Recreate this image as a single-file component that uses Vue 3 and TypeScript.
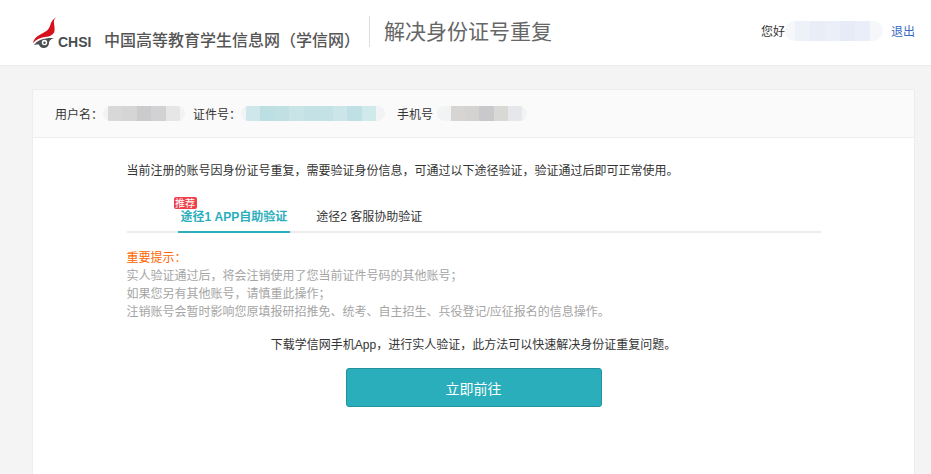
<script setup lang="ts">
import { ref } from 'vue'

// 打码区域的色块
const userCells = ['#d8d8d8', '#d6d5d5', '#cbcbcb', '#d2d2d4', '#e6e6e6']
const idCells = ['#cfe6ea', '#bbdfe3', '#c0e0e4', '#c8e4e7', '#c4e2e5', '#c4e2e5', '#cbe5e9', '#bfe0e4', '#d0e9ea']
const phoneCells = ['#d6d5d3', '#d4d3d1', '#c9c9cb', '#d8d8d5', '#e6e7ea']
const greetCells = ['#edf1f8', '#e8edf7', '#ebeff8', '#e6ecf7', '#e9eef8']

const tabs = ref([
  { label: '途径1 APP自助验证', badge: true, active: true },
  { label: '途径2 客服协助验证', badge: false, active: false }
])

const tips = [
  '实人验证通过后，将会注销使用了您当前证件号码的其他账号；',
  '如果您另有其他账号，请慎重此操作；',
  '注销账号会暂时影响您原填报研招推免、统考、自主招生、兵役登记/应征报名的信息操作。'
]
</script>

<template>
  <div class="page">
    <header class="top">
      <div class="brand">
        <div class="logo">
          <svg class="bird" width="26" height="32" viewBox="0 0 26 32">
            <path d="M24 0C20 1.500 18 4.500 17 9 16 12 14 14 10 16 5 18.500 1 21 0 26 3 22.500 7 20.500 12 20 17 19.500 20.500 18 21.500 14 22 10 20.500 6 21 3.500 21.300 2 22.500 .8 24 0z" fill="#d8101c" />
            <path d="M1 28C4 23 12 20.500 21 21 17.500 22 16 24 16 26 16 29 13.500 31 10.500 31 8 31 6.500 29.500 6 27.500 4.500 27.500 2.500 27.500 1 28z" fill="#4d5052" />
            <circle cx="11.500" cy="25.500" r="2.700" fill="#fff" />
            <circle cx="11.500" cy="25.800" r="1.200" fill="#4d5052" />
          </svg>
          <span class="chsi">CHSI</span>
        </div>
        <span class="site-name">中国高等教育学生信息网（学信网）</span>
        <span class="divider"></span>
        <span class="page-name">解决身份证号重复</span>
      </div>
      <div class="account">
        <span>您好</span>
        <span class="blur greet">
          <i v-for="(c, i) in greetCells" :key="i" :style="{ background: c }"></i>
        </span>
        <a class="logout">退出</a>
      </div>
    </header>

    <main class="main">
      <section class="card">
        <div class="card-head">
          <span>用户名：</span>
          <span class="blur user">
            <i v-for="(c, i) in userCells" :key="i" :style="{ background: c }"></i>
          </span>
          <span class="field">证件号：</span>
          <span class="blur id">
            <i v-for="(c, i) in idCells" :key="i" :style="{ background: c }"></i>
          </span>
          <span class="field phone-label">手机号</span>
          <span class="blur phone">
            <i v-for="(c, i) in phoneCells" :key="i" :style="{ background: c }"></i>
          </span>
        </div>

        <div class="content">
          <p class="intro">当前注册的账号因身份证号重复，需要验证身份信息，可通过以下途径验证，验证通过后即可正常使用。</p>

          <div class="tabs">
            <div v-for="tab in tabs" :key="tab.label" class="tab" :class="{ active: tab.active }">
              <span v-if="tab.badge" class="badge">推荐</span>
              {{ tab.label }}
            </div>
          </div>

          <div class="tips">
            <div class="tips-title">重要提示：</div>
            <div v-for="line in tips" :key="line">{{ line }}</div>
          </div>

          <p class="download">下载学信网手机App，进行实人验证，此方法可以快速解决身份证重复问题。</p>
          <div class="actions">
            <button class="go" type="button">立即前往</button>
          </div>
        </div>
      </section>
    </main>
  </div>
</template>

<style>
html,
body {
  margin: 0;
  background: #f4f4f4;
}
</style>

<style scoped>
.page {
  height: 474px;
  overflow: hidden;
  font-family: "Liberation Sans", "Noto Sans CJK SC", sans-serif;
  font-size: 12px;
  color: #333;
}

.top {
  height: 65px;
  background: #fff;
  border-bottom: 1px solid #ececec;
  display: flex;
  align-items: center;
  justify-content: space-between;
  padding: 0 16px 0 33px;
}

.brand {
  display: flex;
  align-items: center;
}

.logo {
  display: flex;
  align-items: flex-end;
  width: 71px;
  height: 32px;
}

.bird {
  flex: none;
}

.chsi {
  font-weight: 700;
  font-size: 14px;
  line-height: 14px;
  color: #484e50;
  margin-left: -1px;
}

.site-name {
  font-size: 16px;
  font-weight: 500;
  color: #555;
  white-space: nowrap;
  padding-top: 12px;
}

.divider {
  width: 1px;
  height: 31px;
  background: #ddd;
  margin: 0 14px 2px 9px;
}

.page-name {
  font-size: 21px;
  color: #666;
  white-space: nowrap;
  padding-bottom: 5px;
}

.account {
  display: flex;
  align-items: center;
  margin-bottom: 4px;
}

.logout {
  color: #3a6bc4;
  margin-left: 8px;
}

.blur {
  display: inline-flex;
  height: 15px;
  border-radius: 8px;
  overflow: hidden;
  background: #f2f3f5;
  box-sizing: border-box;
}

.blur i {
  display: block;
  flex: 1;
}

.greet {
  width: 98px;
  height: 20px;
  border-radius: 10px;
  padding: 0 13px 0 10px;
  background: #f6f7fa;
}

.user {
  width: 82px;
  padding: 0 5px;
}

.id {
  width: 144px;
  padding: 0 9px 0 5px;
}

.phone {
  width: 90px;
  padding: 0 5px 0 14px;
}

.main {
  padding: 23px 16px 0 32px;
}

.card {
  background: #fff;
  border: 1px solid #ededed;
  border-bottom: 0;
  height: 400px;
}

.card-head {
  height: 47px;
  background: #fafafa;
  border-bottom: 1px solid #ededed;
  display: flex;
  align-items: center;
  padding-left: 22px;
}

.field {
  margin-left: 8px;
}

.phone-label {
  margin-left: 12px;
  margin-right: 4px;
}

.content {
  width: 694px;
  margin: 0 auto;
}

.intro {
  margin: 0;
  padding-top: 24px;
  line-height: 18px;
}

.tabs {
  display: flex;
  margin-top: 19px;
  padding-left: 51px;
  border-bottom: 2px solid #ececec;
}

.tab {
  position: relative;
  height: 32px;
  line-height: 37px;
  padding: 0 3px;
  margin-right: 23px;
  margin-bottom: -2px;
  white-space: nowrap;
  border-bottom: 2px solid transparent;
}

.tab.active {
  color: #2aaebb;
  font-weight: 600;
  border-bottom-color: #2aaebb;
}

.badge {
  position: absolute;
  left: -4px;
  top: -2px;
  width: 23px;
  height: 12px;
  line-height: 13px;
  text-align: center;
  background: #f0404a;
  color: #fff;
  font-size: 10px;
  font-weight: 400;
  border-radius: 2px;
  overflow: hidden;
}

.tips {
  margin-top: 16px;
  color: #a5a5a5;
  line-height: 18px;
}

.tips-title {
  color: #f60;
}

.download {
  margin: 15px 0 0;
  line-height: 18px;
  text-align: center;
}

.actions {
  display: flex;
  justify-content: center;
  margin-top: 14px;
}

.go {
  width: 256px;
  height: 39px;
  background: #2aaebb;
  border: 1px solid #20939e;
  border-radius: 3px;
  color: #fff;
  font-family: inherit;
  font-size: 14px;
  cursor: pointer;
}
</style>
